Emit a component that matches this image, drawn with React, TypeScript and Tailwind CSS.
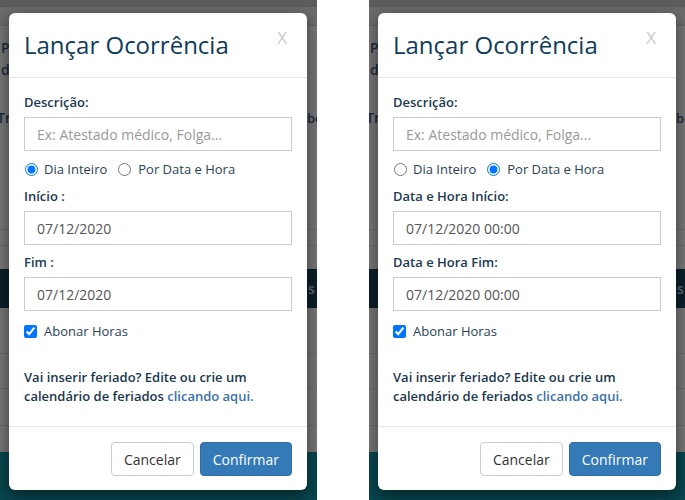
import React from 'react';

type Mode = 'day' | 'time';

function Field({ label, value, top }: { label: string; value: string; top: string }) {
  return (
    <div className={top}>
      <label className="block text-[13px] leading-[18px] font-semibold text-[#1c3a50]">{label}</label>
      <input
        type="text"
        readOnly
        value={value}
        className="mt-[6px] block h-[34px] w-full border border-[#cccccc] px-[12px] text-[14px] text-[#555555] outline-none"
      />
    </div>
  );
}

function Modal({ mode }: { mode: Mode }) {
  const byTime = mode === 'time';
  return (
    <div className="absolute left-[9px] top-[13px] w-[298px] rounded-[6px] bg-white shadow-[0_5px_15px_rgba(0,0,0,0.5)]">
      <div className="flex items-start justify-between border-b border-[#e5e5e5] px-[15px] pt-[15px] pb-[15px]">
        <h4 className="text-[24px] leading-[34px] text-[#0f3c5a]">Lançar Ocorrência</h4>
        <span className="pr-[5px] text-[17px] leading-[20px] text-[#c9c9c9]">X</span>
      </div>

      <div className="px-[15px] pt-[15px] pb-[20px]">
        <label className="block text-[13px] leading-[18px] font-semibold text-[#1c3a50]">Descrição:</label>
        <input
          type="text"
          placeholder="Ex: Atestado médico, Folga..."
          className="mt-[6px] block h-[34px] w-full border border-[#cccccc] px-[12px] text-[14px] text-[#555555] placeholder:text-[#9a9a9a] outline-none"
        />

        <div className="mt-[9px] flex h-[18px] items-center text-[13px] leading-[18px] text-[#2b4255]">
          <input type="radio" name={`tipo-${mode}`} readOnly checked={!byTime} className="m-0 ml-[1px] h-[13px] w-[13px]" />
          <span className="ml-[6px]">Dia Inteiro</span>
          <input type="radio" name={`tipo-${mode}`} readOnly checked={byTime} className="m-0 ml-[11px] h-[13px] w-[13px]" />
          <span className="ml-[7px]">Por Data e Hora</span>
        </div>

        <Field top="mt-[9px]" label={byTime ? 'Data e Hora Início:' : 'Início :'} value={byTime ? '07/12/2020 00:00' : '07/12/2020'} />
        <Field top="mt-[8px]" label={byTime ? 'Data e Hora Fim:' : 'Fim :'} value={byTime ? '07/12/2020 00:00' : '07/12/2020'} />

        <div className="mt-[11px] flex h-[18px] items-center text-[13px] leading-[18px] text-[#2b4255]">
          <input type="checkbox" readOnly checked className="m-0 h-[13px] w-[13px]" />
          <span className="ml-[7px]">Abonar Horas</span>
        </div>

        <p className="mt-[28px] text-[13px] leading-[19px] font-semibold text-[#1a374d]">
          <span>Vai inserir feriado? Edite ou crie um calendário de feriados </span>
          <a className="text-[#3a70ab]">clicando aqui.</a>
        </p>
      </div>

      <div className="flex justify-end gap-[6px] border-t border-[#e5e5e5] px-[15px] pt-[15px] pb-[14px]">
        <button className="h-[34px] rounded-[4px] border border-[#cccccc] bg-white px-[12px] text-[14px] text-[#333333]">
          Cancelar
        </button>
        <button className="h-[34px] rounded-[4px] border border-[#2e6da4] bg-[#337ab7] px-[12px] text-[14px] text-white">
          Confirmar
        </button>
      </div>
    </div>
  );
}

function Panel({ mode }: { mode: Mode }) {
  return (
    <div className="relative h-[500px] w-[317px] shrink-0 overflow-hidden bg-[#767676]">
      <div className="h-[7px] bg-[#5c5c5c]" />
      <div className="h-[19px] border-b border-[#626262] bg-[#6b6b6b]" />
      <div className="h-[203px] pt-[11px] text-[14px] font-semibold leading-[22px] text-[#172c3d]">
        <div className="pl-[1px]">P</div>
        <div className="pl-[1px]">d</div>
        <div className="mt-[26px] flex whitespace-nowrap">
          <span className="ml-[-3px] w-[310px] shrink-0">Tra</span>
          <span className="text-[13px]">bo</span>
        </div>
      </div>
      <div className="h-[16px] border-t border-[#6a6a6a]" />
      <div className="h-[24px] border-t border-[#6a6a6a]" />
      <div className="flex h-[39px] items-center bg-[#0c1f2a] text-[14px] font-semibold text-[#5f6d76]">
        <span className="ml-[308px]">s</span>
      </div>
      <div className="h-[45px]" />
      <div className="h-[35px] border-t border-[#6a6a6a]" />
      <div className="h-[37px] border-t border-[#6a6a6a]" />
      <div className="h-[27px] border-t border-[#6a6a6a]" />
      <div className="h-[48px] bg-[#08464e]" />
      <Modal mode={mode} />
    </div>
  );
}

export default function App() {
  return (
    <div className="flex h-[500px] w-[685px] overflow-hidden bg-white font-['Open_Sans',sans-serif]">
      <Panel mode="day" />
      <div className="w-[52px] shrink-0 bg-white" />
      <Panel mode="time" />
    </div>
  );
}
